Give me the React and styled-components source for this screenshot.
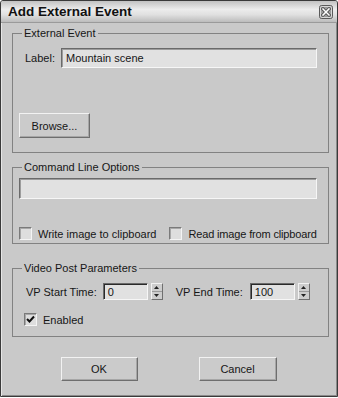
import styled, { createGlobalStyle } from 'styled-components';

const GlobalStyle = createGlobalStyle`
  html, body {
    margin: 0;
    padding: 0;
    background: #ffffff;
  }
  body {
    font-family: "Liberation Sans", Arial, sans-serif;
    font-size: 11px;
    color: #161616;
  }
`;

const Window = styled.div`
  box-sizing: border-box;
  width: 338px;
  height: 397px;
  border: 1px solid #3a3a3a;
  border-radius: 3px 3px 0 0;
  background: #c9c9c9;
  box-shadow: inset 1px 1px 0 #e6e6e6, inset -1px -1px 0 #8a8a8a;
  display: flex;
  flex-direction: column;
  overflow: hidden;
`;

const TitleBar = styled.div`
  height: 21px;
  flex-shrink: 0;
  display: flex;
  align-items: center;
  justify-content: space-between;
  padding: 0 4px 0 7px;
  background: linear-gradient(to bottom, #c2c2c2 0%, #ececec 40%, #e0e0e0 65%, #bcbcbc 100%);
  border-bottom: 1px solid #9a9a9a;
  font-size: 13.5px;
  font-weight: bold;
  color: #111;
`;

const Body = styled.div`
  padding: 4px 8px 0 11px;
  display: flex;
  flex-direction: column;
`;

const Group = styled.fieldset`
  margin: ${p => p.$top || 0}px 0 0 0;
  padding: ${p => p.$pt}px 11px ${p => p.$pb}px 6px;
  border: 1px solid #828282;
  min-inline-size: 0;
  display: flex;
  flex-direction: column;
  align-items: flex-start;
`;

const Legend = styled.legend`
  margin-left: 3px;
  padding: 0 2px;
  line-height: 13px;
  font-size: 11px;
`;

const Row = styled.div`
  display: flex;
  align-items: center;
  align-self: stretch;
  margin-top: ${p => p.$top || 0}px;
  padding-left: ${p => p.$indent || 0}px;
`;

const FieldLabel = styled.span`
  margin-right: ${p => p.$gap}px;
  white-space: nowrap;
`;

const TextBox = styled.div`
  box-sizing: border-box;
  height: ${p => p.$h}px;
  width: ${p => (p.$w ? `${p.$w}px` : 'auto')};
  flex: ${p => (p.$w ? 'none' : '1')};
  background: #e1e1e1;
  border: 1px solid;
  border-color: #6a6a6a #f6f6f6 #f6f6f6 #6a6a6a;
  box-shadow: inset 1px 1px 0 ${p => (p.$dark ? '#2a2a2a' : '#9c9c9c')};
  padding: 0 4px;
  display: flex;
  align-items: center;
  font-size: 11px;
`;

const Button = styled.button`
  box-sizing: border-box;
  width: ${p => p.$w}px;
  height: ${p => p.$h}px;
  margin-top: ${p => p.$top || 0}px;
  background: #cbcbcb;
  border: 1px solid;
  border-color: #f2f2f2 #6e6e6e #6e6e6e #f2f2f2;
  box-shadow: inset -1px -1px 0 #a6a6a6;
  font-family: "Liberation Sans", Arial, sans-serif;
  font-size: 11px;
  color: #161616;
  padding: 0;
`;

const Check = styled.span`
  box-sizing: border-box;
  width: 13px;
  height: 13px;
  flex: none;
  background: #dedede;
  border: 1px solid;
  border-color: #7a7a7a #f4f4f4 #f4f4f4 #7a7a7a;
  box-shadow: inset 1px 1px 0 #a8a8a8;
  display: flex;
  align-items: center;
  justify-content: center;
  margin-right: 6px;
`;

const CheckItem = styled.label`
  display: flex;
  align-items: center;
  margin-right: ${p => p.$gap || 0}px;
  white-space: nowrap;
  letter-spacing: ${p => p.$tight ? '-0.15px' : 'normal'};
`;

const Spinner = styled.div`
  box-sizing: border-box;
  width: 12px;
  height: 17px;
  margin: 0 ${p => p.$after}px 0 3px;
  flex: none;
  display: flex;
  flex-direction: column;
  background: #cdcdcd;
  border: 1px solid;
  border-color: #f2f2f2 #707070 #707070 #f2f2f2;
`;

const SpinHalf = styled.div`
  flex: 1;
  display: flex;
  align-items: center;
  justify-content: center;
  border-top: ${p => (p.$lower ? '1px solid #9a9a9a' : 'none')};
`;

const Footer = styled.div`
  display: flex;
  justify-content: center;
  gap: 61px;
  margin: 20px 0 0 -4px;
`;

function CloseIcon() {
  return (
    <svg width="14" height="14" viewBox="0 0 14 14">
      <rect x="0.5" y="0.5" width="13" height="13" rx="2" fill="#9a9a9a" stroke="#5a5a5a" />
      <rect x="1.5" y="1.5" width="11" height="11" rx="1" fill="none" stroke="#d8d8d8" />
      <path d="M4 4 L10 10 M10 4 L4 10" stroke="#3a3a3a" strokeWidth="3" strokeLinecap="square" />
      <path d="M4 4 L10 10 M10 4 L4 10" stroke="#ffffff" strokeWidth="1.6" strokeLinecap="square" />
    </svg>
  );
}

function Tick() {
  return (
    <svg width="9" height="9" viewBox="0 0 9 9">
      <path d="M1 4 L3.5 6.5 L8 1.5" fill="none" stroke="#111" strokeWidth="2" />
    </svg>
  );
}

function Spin({ after }) {
  return (
    <Spinner $after={after}>
      <SpinHalf>
        <svg width="5" height="3" viewBox="0 0 5 3"><path d="M0 3 L2.5 0 L5 3 Z" fill="#222" /></svg>
      </SpinHalf>
      <SpinHalf $lower>
        <svg width="5" height="3" viewBox="0 0 5 3"><path d="M0 0 L2.5 3 L5 0 Z" fill="#222" /></svg>
      </SpinHalf>
    </Spinner>
  );
}

export default function App() {
  return (
    <>
      <GlobalStyle />
      <Window>
        <TitleBar>
          <span>Add External Event</span>
          <CloseIcon />
        </TitleBar>
        <Body>
          <Group $pt={8} $pb={14}>
            <Legend>External Event</Legend>
            <Row $indent={6}>
              <FieldLabel $gap={6}>Label:</FieldLabel>
              <TextBox $h={20}>Mountain scene</TextBox>
            </Row>
            <Button $w={71} $h={25} $top={45}>Browse...</Button>
          </Group>

          <Group $top={8} $pt={4} $pb={3}>
            <Legend>Command Line Options</Legend>
            <Row>
              <TextBox $h={21} />
            </Row>
            <Row $top={28}>
              <CheckItem $gap={13}><Check />Write image to clipboard</CheckItem>
              <CheckItem $tight><Check />Read image from clipboard</CheckItem>
            </Row>
          </Group>

          <Group $top={18} $pt={8} $pb={10}>
            <Legend>Video Post Parameters</Legend>
            <Row $indent={7}>
              <FieldLabel $gap={6}>VP Start Time:</FieldLabel>
              <TextBox $h={17} $w={45} $dark>0</TextBox>
              <Spin after={13} />
              <FieldLabel $gap={7}>VP End Time:</FieldLabel>
              <TextBox $h={17} $w={45} $dark>100</TextBox>
              <Spin after={0} />
            </Row>
            <Row $top={13} $indent={5}>
              <CheckItem><Check><Tick /></Check>Enabled</CheckItem>
            </Row>
          </Group>

          <Footer>
            <Button $w={77} $h={24}>OK</Button>
            <Button $w={78} $h={24}>Cancel</Button>
          </Footer>
        </Body>
      </Window>
    </>
  );
}
